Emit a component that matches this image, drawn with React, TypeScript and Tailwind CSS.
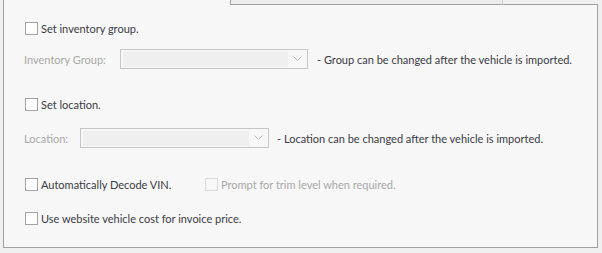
import type { ReactNode } from "react";

const FONT = { fontFamily: 'Lato, "Liberation Sans", Arial, sans-serif' };

function Box({ disabled }: { disabled?: boolean }) {
  return (
    <span
      className={
        disabled
          ? "h-[13px] w-[13px] shrink-0 border border-[#dadada] bg-[#f7f7f7]"
          : "h-[13px] w-[13px] shrink-0 border border-[#a3a3a3] bg-white"
      }
    />
  );
}

function Check({ children, disabled }: { children: ReactNode; disabled?: boolean }) {
  return (
    <div className="flex h-[13px] items-center gap-[3px] whitespace-nowrap">
      <Box disabled={disabled} />
      <span className={disabled ? "text-[#a8a8a8]" : "text-[#3a3a44]"}>{children}</span>
    </div>
  );
}

function Combo({ w }: { w: string }) {
  return (
    <div className={`flex h-[20px] shrink-0 items-center border border-[#c6c6c6] bg-[#f7f7f7] pl-[2px] pr-[5px] ${w}`}>
      <div className="h-[15px] flex-1 bg-[#efefef]" />
      <svg width="9" height="6" viewBox="0 0 9 6" className="ml-[5px]">
        <path d="M0.5 0.5 L4.5 4.5 L8.5 0.5" fill="none" stroke="#b4b4b4" strokeWidth="1" />
      </svg>
    </div>
  );
}

export default function App() {
  return (
    <div className="h-[253px] w-[602px] overflow-hidden bg-[#f0f0f0] text-[11px] leading-none" style={FONT}>
      <div className="ml-[3px] flex w-[595px] flex-col">
        <div className="flex h-[5px]">
          <div className="w-[227px] border-l border-[#a0a0a0] bg-[#f7f7f7]" />
          <div className="w-[273px] border-b border-l border-r border-[#a0a0a0] border-r-[#cfcfcf] bg-[#ececec]" />
          <div className="flex-1 border-b border-[#a0a0a0]" />
        </div>
        <div className="flex h-[243px] flex-col border-b border-l border-r border-[#a0a0a0] bg-[#f7f7f7] pl-[21px] pt-[17px]">
          <Check>Set inventory group.</Check>
          <div className="mt-[14px] flex items-center whitespace-nowrap">
            <span className="-ml-px w-[96px] shrink-0 text-[#a8a8a8]">Inventory Group:</span>
            <Combo w="w-[188px]" />
            <span className="ml-[9px] text-[#3a3a44]">- Group can be changed after the vehicle is imported.</span>
          </div>
          <div className="mt-[29px]">
            <Check>Set location.</Check>
          </div>
          <div className="mt-[17px] flex items-center whitespace-nowrap">
            <span className="-ml-px w-[56px] shrink-0 text-[#a8a8a8]">Location:</span>
            <Combo w="w-[189px]" />
            <span className="ml-[8px] text-[#3a3a44]">- Location can be changed after the vehicle is imported.</span>
          </div>
          <div className="mt-[30px] flex">
            <div className="w-[180px]">
              <Check>Automatically Decode VIN.</Check>
            </div>
            <Check disabled>Prompt for trim level when required.</Check>
          </div>
          <div className="mt-[21px]">
            <Check>Use website vehicle cost for invoice price.</Check>
          </div>
        </div>
      </div>
    </div>
  );
}
